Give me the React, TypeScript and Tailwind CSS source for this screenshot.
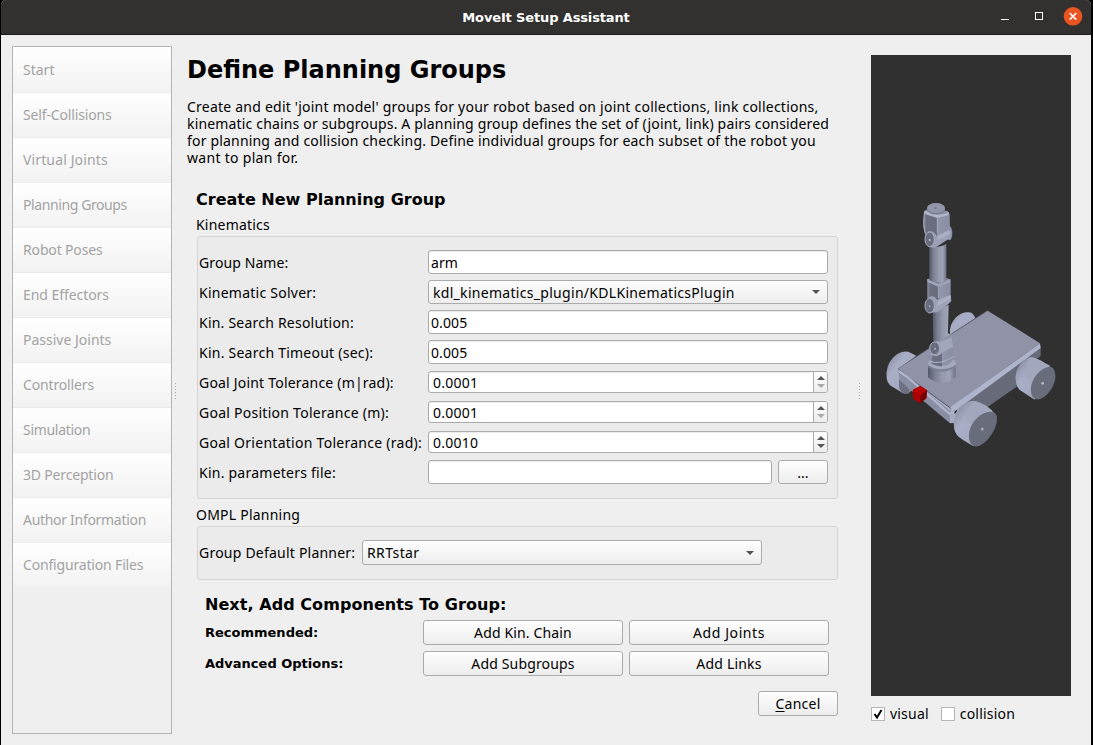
import type { ReactNode } from "react";

const steps: [string, string][] = [
  ["Start", "tracking-[0px]"],
  ["Self-Collisions", "tracking-[-0.15px]"],
  ["Virtual Joints", "tracking-[0.13px]"],
  ["Planning Groups", "tracking-[-0.4px]"],
  ["Robot Poses", "tracking-[-0.15px]"],
  ["End Effectors", "tracking-[-0.06px]"],
  ["Passive Joints", "tracking-[0px]"],
  ["Controllers", "tracking-[-0.15px]"],
  ["Simulation", "tracking-[-0.3px]"],
  ["3D Perception", "tracking-[-0.18px]"],
  ["Author Information", "tracking-[-0.3px]"],
  ["Configuration Files", "tracking-[-0.17px]"],
];

const box = "box-border rounded-[3px] border border-[#ababab]";
const raised = "bg-linear-to-b from-[#fefefe] to-[#ededed]";

function Arrow({ up = false, dim = false }: { up?: boolean; dim?: boolean }) {
  return (
    <svg width="8" height="4" viewBox="0 0 8 4" className={dim ? "text-[#a8a8a8]" : "text-[#545454]"}>
      <path d={up ? "M0 4 L4 0 L8 4Z" : "M0 0 L8 0 L4 4Z"} fill="currentColor" />
    </svg>
  );
}

function Row({ label, track, children }: { label: string; track: string; children: ReactNode }) {
  return (
    <div className="flex h-[30px] items-center">
      <div className={`w-[229px] shrink-0 whitespace-nowrap ${track}`}>{label}</div>
      {children}
    </div>
  );
}

function Field({ value = "", w = "w-[400px]" }: { value?: string; w?: string }) {
  return (
    <div className={`${box} ${w} flex h-6 items-center bg-white pl-[2px] tracking-[0.1px] shadow-[inset_0_1px_0_#ececec]`}>{value}</div>
  );
}

function Spin({ value, dim = false }: { value: string; dim?: boolean }) {
  return (
    <div className={`${box} flex h-[22px] w-[400px] overflow-hidden bg-white shadow-[inset_0_1px_0_#ececec]`}>
      <div className="flex flex-1 items-center pl-1 tracking-[0.25px]">{value}</div>
      <div className={`${raised} flex w-[14px] flex-col items-center gap-1 border-l border-[#ababab] pt-1`}>
        <Arrow up />
        <Arrow dim={dim} />
      </div>
    </div>
  );
}

function Combo({ value, h, track }: { value: string; h: string; track: string }) {
  return (
    <div className={`${box} ${raised} ${h} ${track} flex w-[400px] items-center justify-between pr-[7px] pl-1`}>
      <span className="whitespace-nowrap">{value}</span>
      <Arrow />
    </div>
  );
}

function Button({ children, size = "h-[25px] w-[200px]", track = "" }: { children: ReactNode; size?: string; track?: string }) {
  return (
    <button className={`${box} ${raised} ${size} ${track} flex items-center justify-center whitespace-nowrap`}>{children}</button>
  );
}

function Handle({ pos }: { pos: string }) {
  return (
    <div className={`flex shrink-0 flex-col gap-[2px] pt-[348px] ${pos}`}>
      {[0, 1, 2, 3, 4, 5].map((i) => (
        <div key={i} className="h-px w-px bg-[#a8a8a8]" />
      ))}
    </div>
  );
}

function Robot() {
  return (
    <svg width="200" height="641" viewBox="0 0 200 641" className="block">
      <defs>
        <linearGradient id="tube">
          <stop offset="0" stopColor="#555868" />
          <stop offset=".22" stopColor="#797c8f" />
          <stop offset=".5" stopColor="#9599ac" />
          <stop offset=".78" stopColor="#a0a4b8" />
          <stop offset="1" stopColor="#6f7283" />
        </linearGradient>
        <linearGradient id="tire" x1="0" y1="0" x2="1" y2="1">
          <stop offset="0" stopColor="#7f8394" />
          <stop offset=".35" stopColor="#a9aec7" />
          <stop offset=".6" stopColor="#a6abc2" />
          <stop offset="1" stopColor="#8387a0" />
        </linearGradient>
        <linearGradient id="block">
          <stop offset="0" stopColor="#8d90a5" />
          <stop offset=".12" stopColor="#6c6f80" />
          <stop offset=".5" stopColor="#686b7b" />
          <stop offset=".53" stopColor="#9296aa" />
          <stop offset="1" stopColor="#898da1" />
        </linearGradient>
      </defs>
      <g transform="translate(-1 135) scale(.33333)">
        <path d="M240 435 Q236 405 258 382 Q276 364 298 367 Q310 369 316 384 L246 430Z" fill="url(#tire)" />
        <path d="M50 564 Q46 530 68 504 Q89 480 115 485 L139 497 L84 538 L124 602 Q115 613 99 610 L67 590 Q52 582 50 564Z" fill="url(#tire)" />
        <path d="M87 568 L119 594 L116 611 Q88 612 87 588Z" fill="#6d7081" />
        <path d="M512 470 L512 498 L446 550 L440 590 L354 650 L262 660 L238 655Z" fill="#676a79" />
        <path d="M84 536 L353 362 L510 460 L240 653Z" fill="#9093a7" />
        <path d="M84 536 L240 653 L254 665 L240 673 L84 546Z" fill="#a9aec7" />
        <path d="M84 537 L130 573 L245 657" fill="none" stroke="#555867" strokeWidth="3" />
        <path d="M240 652 L510 460 L512 474 L250 667Z" fill="#afb4cd" />
        <path d="M84 537 L253 673 L252 700 L239 699 L112 592 L89 570Z" fill="#8a8ea5" />
        <path d="M86 543 L111 560 L238 671 L253 667" fill="none" stroke="#b0b5cd" strokeWidth="7" />
        <path d="M239 675 L258 669 L264 655 L270 658 L258 696 L240 700Z" fill="#a7acc4" />
        <path d="M84 536 L353 362" stroke="#737688" strokeWidth="2" />

        <path d="M174 528 L174 562 Q214 595 257 562 L257 528 Q215 505 174 528Z" fill="url(#tube)" />
        <ellipse cx="216" cy="522" rx="42" ry="20" fill="#a5a9be" />
        <path d="M174 524 Q215 552 258 524 L258 530 Q214 560 174 530Z" fill="#7d8194" />
        <path d="M186 476 L182 520 Q196 529 215 529 Q236 527 247 512 L249 472Z" fill="url(#block)" />
        <path d="M188 360 L236 345 L234 430 L248 436 L245 463 L190 462Z" fill="url(#tube)" />
        <path d="M198 456 L247 432 Q261 440 254 460 L210 487Z" fill="#8f93a8" />
        <path d="M184 464 Q194 449 208 457 L244 441 L250 471 L202 494Z" fill="#a1a6ba" />
        <ellipse cx="194" cy="475" rx="15" ry="19" fill="#696c7d" stroke="#a6aabf" strokeWidth="3" />
        <circle cx="195" cy="476" r="3" fill="#aeb2c5" />
        <path d="M182 493 Q205 502 216 487 M180 514 Q209 526 250 500" fill="none" stroke="#b0b4ca" strokeWidth="3" />

        <path d="M172 267 L184 266 L230 265 L242 268 L242 308 L238 340 L210 362 L172 326Z" fill="url(#block)" />
        <path d="M172 267 L184 266 Q204 294 236 268 L242 276 L206 291 L172 276Z" fill="#9fa3b9" />
        <path d="M206 291 L206 324" stroke="#afb3c7" strokeWidth="3" />
        <path d="M178 166 Q204 177 229 162 L229 270 Q203 285 178 270Z" fill="url(#tube)" />
        <path d="M175 323 Q192 312 200 329 L242 314 L244 334 L202 367 L180 368Z" fill="#9da2b7" />
        <path d="M204 335 L242 316 L243 325 L202 348Z" fill="#adb2c9" />
        <ellipse cx="179" cy="347" rx="14" ry="22" fill="#696c7d" stroke="#a6aabf" strokeWidth="3" />
        <circle cx="179" cy="349" r="3" fill="#a4a8bc" />

        <path d="M164 62 L232 62 L239 72 L240 116 L230 142 L166 140 L160 105Z" fill="url(#block)" />
        <ellipse cx="238" cy="130" rx="9" ry="21" fill="#8f93aa" />
        <path d="M163 62 L178 60 Q190 77 223 72 L237 66 L235 76 L202 84 L162 71Z" fill="#b1b5cc" />
        <path d="M163 70 Q158 107 166 130 M202 83 L202 128" fill="none" stroke="#a9adc2" strokeWidth="3" />
        <path d="M170 55 L170 63 Q197 85 225 62 L225 54Z" fill="#777b8e" />
        <ellipse cx="198" cy="54" rx="27" ry="15" fill="#9296ab" />
        <circle cx="197" cy="55" r="3" fill="#737689" />
        <path d="M171 128 Q186 117 200 137 L236 120 Q247 126 239 145 L198 172 Q184 176 177 167Z" fill="#9ca0b6" />
        <path d="M203 139 L238 121 L240 131 L202 151Z" fill="#abb0c7" />
        <ellipse cx="179" cy="148" rx="14" ry="22" fill="#696c7d" stroke="#aaaec3" strokeWidth="3" />
        <circle cx="179" cy="150" r="3" fill="#c0c3d1" />

        <path d="M438 575 Q431 548 453 520 Q471 500 490 502 L540 527 L494 629 L455 604 Q440 595 438 575Z" fill="url(#tire)" />
        <path d="M478 502 Q520 505 553 545 L500 590 L460 560Z" fill="#a2a7bd" />
        <path d="M555 548 C562 572 542 610 516 625 C491 637 478 614 484 585 C492 555 518 530 540 530 C549 531 553 538 555 548Z" fill="#696c7b" />
        <circle cx="518" cy="580" r="4" fill="#b9bdd0" />
        <path d="M252 714 Q247 680 271 650 Q292 630 319 634 L366 661 L310 769 L278 749 Q256 737 252 714Z" fill="url(#tire)" />
        <path d="M310 633 Q355 640 380 679 L330 720 L285 690Z" fill="#a2a7bd" />
        <path d="M380 679 C386 708 358 753 329 767 C306 777 292 755 298 724 C305 690 338 663 364 665 C374 666 378 671 380 679Z" fill="#696c7b" />
        <circle cx="337" cy="718" r="6" fill="#7c7f90" />
        <circle cx="337" cy="717" r="3" fill="#c0c3d1" />

        <path d="M128 600 L151 588 L171 601 L169 625 L149 640 L130 626Z" fill="#ae0000" />
        <path d="M128 600 L151 588 L171 601 L151 615Z" fill="#b80000" />
        <path d="M151 615 L171 601 L169 625 L149 640Z" fill="#760000" />
      </g>
    </svg>
  );
}

function Check({ label, on = false, track }: { label: string; on?: boolean; track: string }) {
  return (
    <div className="flex items-center gap-[5px]">
      <div className="flex h-[14px] w-[14px] items-center justify-center border border-[#b6b6b6] bg-white">
        {on && (
          <svg width="10" height="10" viewBox="0 0 10 10">
            <path d="M1.5 5 L4 8.5 L8.5 1" fill="none" stroke="#000" strokeWidth="2" />
          </svg>
        )}
      </div>
      <span className={track}>{label}</span>
    </div>
  );
}

export default function App() {
  return (
    <div className="h-[745px] w-[1093px] overflow-hidden bg-black pr-[2px] pl-px font-['Noto_Sans',sans-serif] text-[14px] leading-[17px] text-black">
      <div className="flex h-full flex-col rounded-t-[5px] bg-[#efefef]">
        <header className="grid h-[35px] shrink-0 grid-cols-[1fr_auto_1fr] items-center rounded-t-[5px] border-b border-[#1e1c1c] bg-[#333030] text-white">
          <span />
          <span className="font-['DejaVu_Sans',sans-serif] text-[13px] font-bold tracking-[-0.14px]">MoveIt Setup Assistant</span>
          <div className="flex items-center justify-end pr-[8px]">
            <svg width="82" height="20" viewBox="0 0 82 20">
              <path d="M0 12h8v1h-8z" fill="#fff" />
              <rect x="34.5" y="5.5" width="7" height="7" fill="none" stroke="#fff" />
              <circle cx="72" cy="9.3" r="9.3" fill="#e95420" />
              <path d="M68.7 6l6.6 6.6M75.3 6l-6.6 6.6" stroke="#fff" strokeWidth="1.6" />
            </svg>
          </div>
        </header>
        <div className="flex min-h-0 flex-1">
          <nav className="mt-[11px] ml-[11px] h-[688px] w-[160px] shrink-0 border border-[#b4b4b4] text-[#a3a3a3]">
            {steps.map(([name, track]) => (
              <div key={name} className="flex h-[45px] items-center border-t border-[#ebebeb] bg-linear-to-b from-white to-[#f2f2f2] pb-[2px] pl-[10px] whitespace-nowrap first:border-white">
                <span className={track}>{name}</span>
              </div>
            ))}
          </nav>
          <Handle pos="ml-[3px]" />
          <main className="ml-[11px] w-[651px] shrink-0 pt-[19px]">
            <h1 className="font-['DejaVu_Sans',sans-serif] text-[24px] leading-8 font-bold">Define Planning Groups</h1>
            <div className="mt-[12px] whitespace-nowrap">
              <p className="tracking-[0.226px]">Create and edit 'joint model' groups for your robot based on joint collections, link collections,</p>
              <p className="tracking-[0.165px]">kinematic chains or subgroups. A planning group defines the set of (joint, link) pairs considered</p>
              <p className="tracking-[0.183px]">for planning and collision checking. Define individual groups for each subset of the robot you</p>
              <p className="tracking-[0.3px]">want to plan for.</p>
            </div>
            <h2 className="mt-[24px] ml-[9px] font-['DejaVu_Sans',sans-serif] text-[16px] leading-5 font-bold">Create New Planning Group</h2>
            <div className="mt-[6px] ml-[9px] tracking-[0.2px]">Kinematics</div>
            <section className="mt-[3px] ml-[10px] h-[263px] w-[641px] rounded-[3px] border border-[#d4d4d4] bg-[#ebebeb] pt-[10px] pl-px">
              <Row label="Group Name:" track="tracking-[0.1px]"><Field value="arm" /></Row>
              <Row label="Kinematic Solver:" track="tracking-[0.25px]">
                <Combo value="kdl_kinematics_plugin/KDLKinematicsPlugin" h="h-6" track="tracking-[0.3px]" />
              </Row>
              <Row label="Kin. Search Resolution:" track="tracking-[0.22px]"><Field value="0.005" /></Row>
              <Row label="Kin. Search Timeout (sec):" track="tracking-[0.24px]"><Field value="0.005" /></Row>
              <Row label="Goal Joint Tolerance (m|rad):" track="tracking-[0.2px]"><Spin value="0.0001" dim /></Row>
              <Row label="Goal Position Tolerance (m):" track="tracking-[0.26px]"><Spin value="0.0001" dim /></Row>
              <Row label="Goal Orientation Tolerance (rad):" track="tracking-[0.27px]"><Spin value="0.0010" /></Row>
              <Row label="Kin. parameters file:" track="tracking-[0.24px]">
                <Field w="w-[344px] mr-[6px]" />
                <Button size="h-6 w-[50px]">...</Button>
              </Row>
            </section>
            <div className="mt-[7px] ml-[9px] tracking-[0.23px]">OMPL Planning</div>
            <section className="mt-[3px] ml-[10px] flex h-[54px] w-[641px] items-start rounded-[3px] border border-[#d4d4d4] bg-[#ebebeb] pt-[13px] pl-px">
              <div className="w-[163px] shrink-0 leading-[25px] tracking-[0.22px] whitespace-nowrap">Group Default Planner:</div>
              <Combo value="RRTstar" h="h-[25px]" track="tracking-[0.4px]" />
            </section>
            <h2 className="mt-[15px] ml-[18px] font-['DejaVu_Sans',sans-serif] text-[16px] leading-5 font-bold tracking-[0.06px]">Next, Add Components To Group:</h2>
            <div className="mt-[5px] ml-[18px] grid grid-cols-[212px_200px_200px] items-center gap-x-[6px] gap-y-[6px]">
              <div className="font-['DejaVu_Sans',sans-serif] text-[13px] font-bold">Recommended:</div>
              <Button track="tracking-[0.15px]">Add Kin. Chain</Button>
              <Button track="tracking-[0.6px]">Add Joints</Button>
              <div className="font-['DejaVu_Sans',sans-serif] text-[13px] font-bold">Advanced Options:</div>
              <Button track="tracking-[0.15px]">Add Subgroups</Button>
              <Button track="tracking-[0.2px]">Add Links</Button>
            </div>
            <div className="mt-[15px] flex justify-end">
              <Button size="h-[25px] w-[80px]" track="tracking-[0.25px]">
                <span><span className="underline underline-offset-2">C</span>ancel</span>
              </Button>
            </div>
          </main>
          <Handle pos="ml-[21px]" />
          <aside className="mt-5 ml-[11px] w-[200px] shrink-0">
            <div className="h-[641px] bg-[#303030]"><Robot /></div>
            <div className="mt-[9px] flex gap-[12px]">
              <Check label="visual" on track="tracking-[0.2px]" />
              <Check label="collision" track="tracking-[0.2px]" />
            </div>
          </aside>
        </div>
      </div>
    </div>
  );
}
